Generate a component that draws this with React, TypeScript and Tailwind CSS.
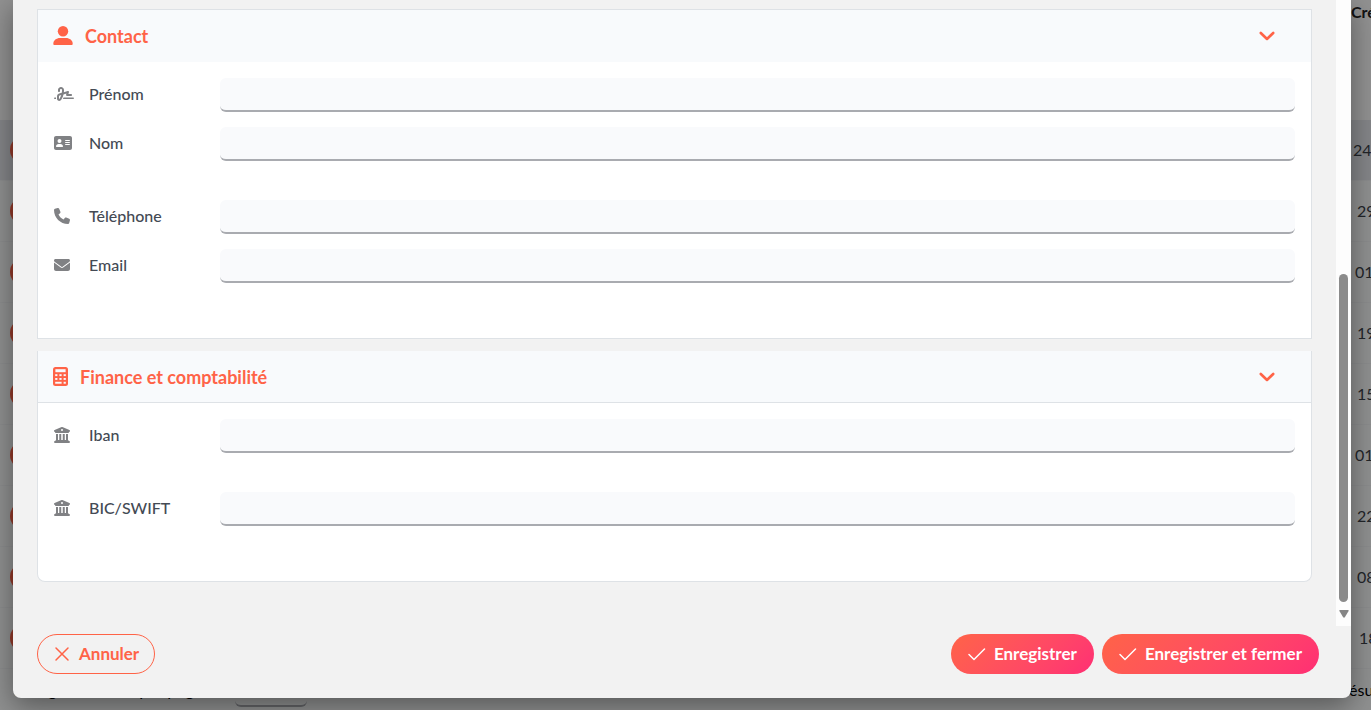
import React from 'react';
import {
  FaSignature,
  FaAddressCard,
  FaPhone,
  FaEnvelope,
  FaBuildingColumns,
} from 'react-icons/fa6';

const contactFields = [
  { id: 'prenom', label: 'Prénom', type: 'text', icon: <FaSignature className="h-4 w-5" />, gap: 'mt-0' },
  { id: 'nom', label: 'Nom', type: 'text', icon: <FaAddressCard className="h-4 w-[18px]" />, gap: 'mt-[15px]' },
  { id: 'telephone', label: 'Téléphone', type: 'tel', icon: <FaPhone className="size-4" />, gap: 'mt-[39px]' },
  { id: 'email', label: 'Email', type: 'email', icon: <FaEnvelope className="size-4" />, gap: 'mt-[15px]' },
];

const financeFields = [
  { id: 'iban', label: 'Iban', type: 'text', icon: <FaBuildingColumns className="size-4" />, gap: 'mt-0' },
  { id: 'bic', label: 'BIC/SWIFT', type: 'text', icon: <FaBuildingColumns className="size-4" />, gap: 'mt-[39px]' },
];

const rows = [
  { day: '24', pad: 'pl-0.5', selected: true },
  { day: '29', pad: 'pl-1.5', selected: false },
  { day: '01', pad: 'pl-1', selected: false },
  { day: '19', pad: 'pl-1.5', selected: false },
  { day: '15', pad: 'pl-1.5', selected: false },
  { day: '01', pad: 'pl-1', selected: false },
  { day: '22', pad: 'pl-1.5', selected: false },
  { day: '08', pad: 'pl-1.5', selected: false },
  { day: '18', pad: 'pl-2', selected: false },
];

function PersonIcon() {
  return (
    <svg viewBox="0 0 20 20" className="size-5" fill="currentColor" aria-hidden="true">
      <circle cx="10" cy="5.2" r="5.2" />
      <path d="M.3 17.700C.3 14.300 3.500 12 7 12h6c3.500 0 6.700 2.300 6.700 5.700 0 .8-.4 1.300-1.200 1.300h-17C.7 19 .3 18.500.3 17.700z" />
    </svg>
  );
}

function CalculatorIcon() {
  return (
    <svg viewBox="0 0 15 20" className="h-5 w-[15px]" aria-hidden="true">
      <rect x="0" y="0" width="15" height="19" rx="2.500" fill="currentColor" />
      <g fill="#f8fafc">
        <rect x="2.400" y="2.200" width="10.200" height="3" />
        <rect x="2.200" y="7.200" width="2.200" height="1.900" />
        <rect x="6.400" y="7.200" width="2.200" height="1.900" />
        <rect x="10.600" y="7.200" width="2.200" height="1.900" />
        <rect x="2.200" y="11" width="2.200" height="1.900" />
        <rect x="6.400" y="11" width="2.200" height="1.900" />
        <rect x="10.600" y="11" width="2.200" height="1.900" />
        <rect x="2.200" y="14.800" width="6.400" height="1.900" />
        <rect x="10.600" y="14.800" width="2.200" height="1.900" />
      </g>
    </svg>
  );
}

function Chevron() {
  return (
    <svg viewBox="0 0 16 16" className="size-4" fill="none" stroke="currentColor" strokeWidth="2.600" strokeLinecap="round" strokeLinejoin="round" aria-hidden="true">
      <path d="M1.800 5 8 11 14.200 5" />
    </svg>
  );
}

function CloseIcon() {
  return (
    <svg viewBox="0 0 18 18" className="size-[18px]" fill="none" stroke="currentColor" strokeWidth="1.500" strokeLinecap="round" aria-hidden="true">
      <path d="M3 3l12 12M15 3L3 15" />
    </svg>
  );
}

function CheckIcon() {
  return (
    <svg viewBox="0 0 18 18" className="size-[18px]" fill="none" stroke="currentColor" strokeWidth="1.500" strokeLinecap="round" strokeLinejoin="round" aria-hidden="true">
      <path d="M1 9.500l5 5L16.500 4" />
    </svg>
  );
}

function Field({ id, label, type, icon, gap }: (typeof contactFields)[number]) {
  return (
    <div className={`flex items-center ${gap}`}>
      <label htmlFor={id} className="flex w-[166px] shrink-0 items-center pb-0.5 text-base leading-5 font-medium text-[#444a54]">
        <span className="flex w-[35px] shrink-0 text-[#808184]">{icon}</span>
        {label}
      </label>
      <input
        id={id}
        type={type}
        className="h-[34px] min-w-0 flex-1 rounded-md border-b-2 border-[#a9abb0] bg-[#f9fafc] px-3 outline-none"
      />
    </div>
  );
}

function ListBehind() {
  return (
    <div className="absolute inset-0 overflow-hidden bg-[#f6f8f9] text-[#3c4048]">
      <div className="flex h-[120px] justify-end bg-[#fafafa]">
        <span className="w-5 pt-0.5 text-base leading-5 font-bold whitespace-nowrap text-[#222]">Cré</span>
      </div>
      {rows.map((row, i) => (
        <div key={i} className={`flex h-[61px] items-center justify-between border-b border-[#f0f2f3] pl-2.5 ${row.selected ? 'bg-[#e3e6eb]' : ''}`}>
          <span className="size-7 rounded-full bg-[#ff6347]" />
          <span className={`w-5 text-base ${row.pad}`}>{row.day}</span>
        </div>
      ))}
      <div className="flex h-[42px] items-center justify-between pl-3.5 text-[17px] text-black">
        <label className="flex items-center gap-8">
          Enregistrements par page
          <select className="h-[34px] w-[72px] appearance-none rounded-md border-b-2 border-[#a9abb0]" />
        </label>
        <span className="w-[22px] text-base">ésu</span>
      </div>
    </div>
  );
}

export default function App() {
  return (
    <div className="relative min-h-screen overflow-hidden font-['Lato','Open_Sans',sans-serif]">
      <ListBehind />
      <div className="relative min-h-screen bg-black/42 pr-5 pb-3 pl-[13px]">
        <div role="dialog" aria-label="Contact" className="overflow-hidden rounded-b-lg bg-[#f2f2f2] shadow-[0_8px_28px_rgba(0,0,0,0.4)]">
          <div className="flex">
            <div className="min-w-0 flex-1 px-6 pt-[9px] pb-11">
              <section className="border border-[#dee2e6] bg-white">
                <button type="button" className="flex h-[52px] w-full items-center bg-[#f8fafc] pr-9 pl-[15px] text-[#ff6347]">
                  <PersonIcon />
                  <span className="ml-3 flex-1 text-left text-lg leading-6 font-bold">Contact</span>
                  <Chevron />
                </button>
                <div className="px-4 pt-4 pb-[55px]">
                  {contactFields.map((field) => (
                    <Field key={field.id} {...field} />
                  ))}
                </div>
              </section>

              <section className="mt-3 overflow-hidden rounded-b-lg border border-t-0 border-[#dee2e6] bg-white">
                <button type="button" className="flex h-[52px] w-full items-center border-b border-[#dee2e6] bg-[#f8fafc] pr-9 pl-[15px] text-[#ff6347]">
                  <CalculatorIcon />
                  <span className="ml-3 flex-1 text-left text-lg leading-6 font-bold">Finance et comptabilité</span>
                  <Chevron />
                </button>
                <div className="px-4 pt-4 pb-[55px]">
                  {financeFields.map((field) => (
                    <Field key={field.id} {...field} />
                  ))}
                </div>
              </section>
            </div>

            {/* Scrollbar */}
            <div className="flex w-[15px] flex-col items-center justify-end bg-[#fdfdfd] pb-2">
              <div className="h-[328px] w-[9px] rounded-full bg-[#8b8b8b]" />
              <svg viewBox="0 0 10 8" className="mt-2 h-2 w-2.5" fill="#858585" aria-hidden="true">
                <path d="M1 0h8q1 0 .6 1L6 7q-1 1.500-2 0L.4 1Q0 0 1 0z" />
              </svg>
            </div>
          </div>

          <footer className="flex items-center gap-2 pt-2 pr-8 pb-6 pl-6 text-[17px] leading-6 font-bold">
            <button type="button" className="mr-auto flex h-10 items-center gap-2 rounded-full border border-[#ff6347] px-[15px] text-[#ff6347]">
              <CloseIcon />
              Annuler
            </button>
            <button type="button" className="flex h-10 items-center gap-2 rounded-full bg-linear-135 from-[#ff6347] to-[#ff2e74] px-[17px] text-white">
              <CheckIcon />
              Enregistrer
            </button>
            <button type="button" className="flex h-10 items-center gap-2 rounded-full bg-linear-135 from-[#ff6347] to-[#ff2e74] px-[17px] text-white">
              <CheckIcon />
              Enregistrer et fermer
            </button>
          </footer>
        </div>
      </div>
    </div>
  );
}
